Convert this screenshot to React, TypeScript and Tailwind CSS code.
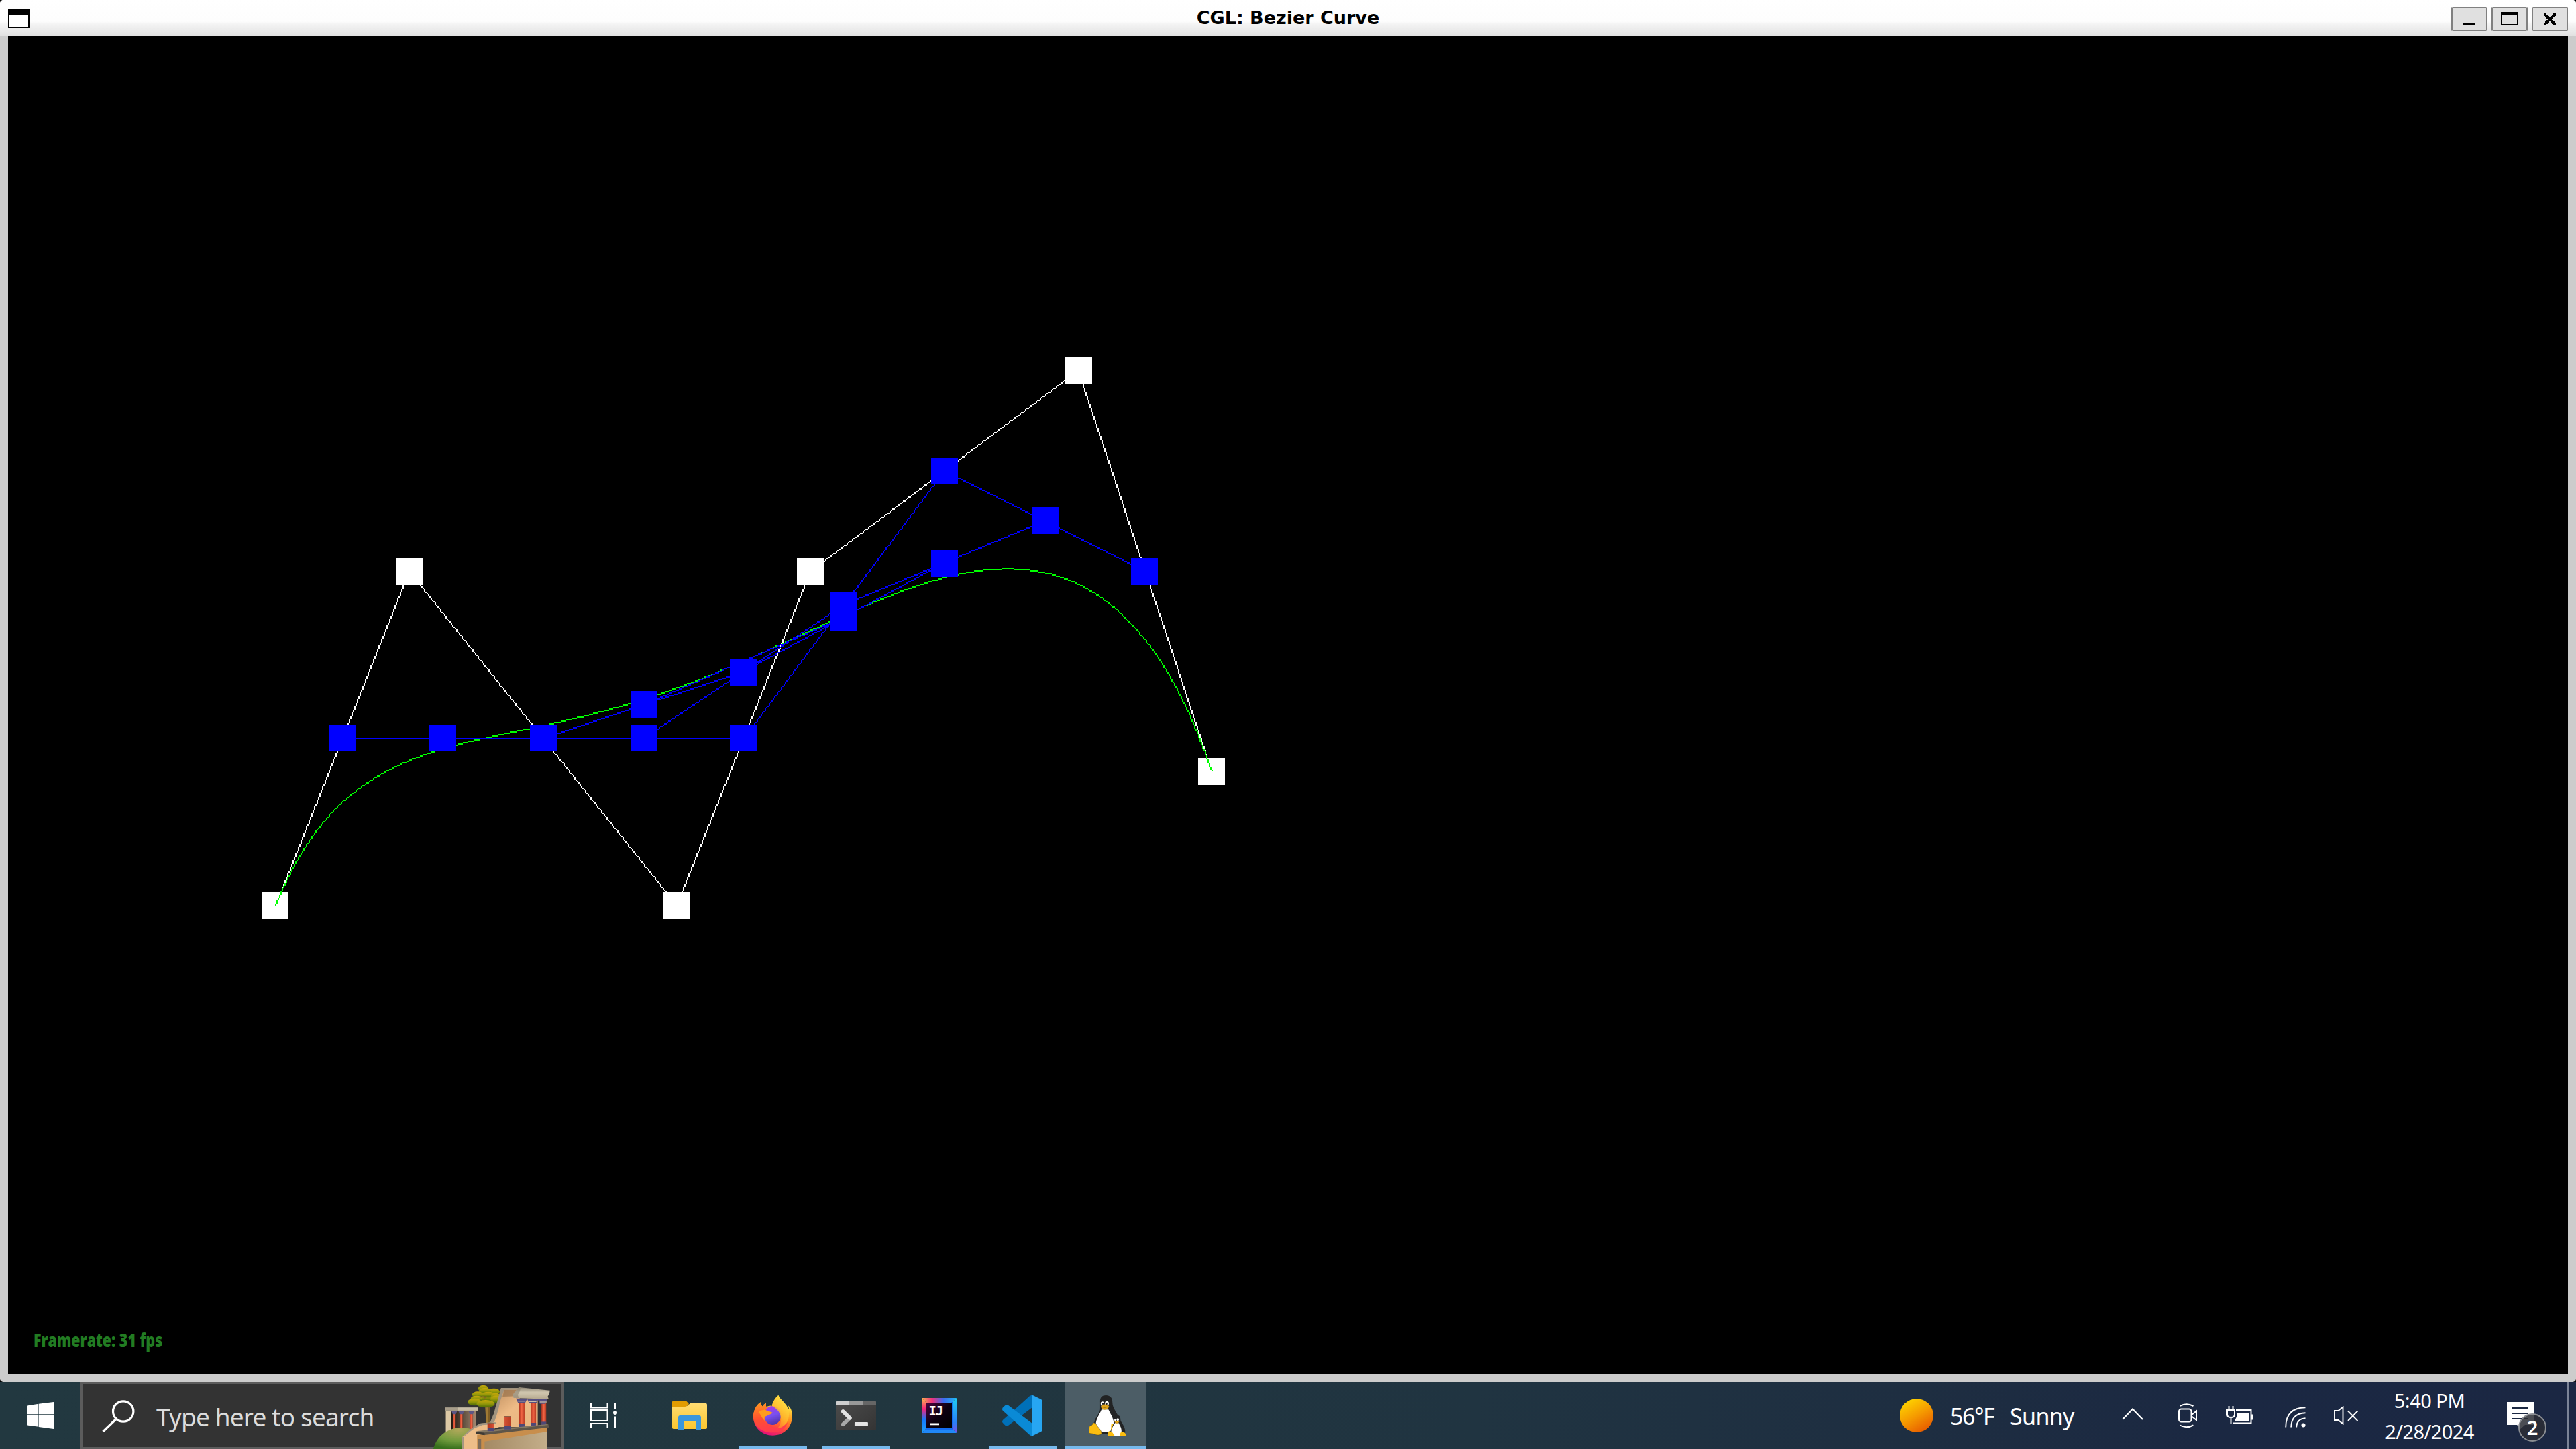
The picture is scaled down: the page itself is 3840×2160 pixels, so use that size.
import React from "react";

type Pt = [number, number];

const SCALE = 0.997;
const CONTROL: Pt[] = [
  [200, 650],
  [300, 400],
  [500, 650],
  [600, 400],
  [800, 250],
  [900, 550],
];

const mid = (pts: Pt[], t: number): Pt[] =>
  pts.slice(1).map((p, i) => [pts[i][0] * (1 - t) + p[0] * t, pts[i][1] * (1 - t) + p[1] * t] as Pt);

const bezier = (t: number): Pt => {
  let pts = CONTROL;
  while (pts.length > 1) pts = mid(pts, t);
  return pts[0];
};

// Rasterises a polyline to unit cells, without antialiasing.
function raster(points: Pt[]): string {
  const seen = new Set<string>();
  for (let i = 0; i < points.length - 1; i++) {
    let [x0, y0] = [points[i][0] * SCALE, points[i][1] * SCALE];
    let [x1, y1] = [points[i + 1][0] * SCALE, points[i + 1][1] * SCALE];
    if (Math.abs(x1 - x0) >= Math.abs(y1 - y0)) {
      if (x0 > x1) [x0, y0, x1, y1] = [x1, y1, x0, y0];
      for (let x = Math.round(x0); x + 0.5 <= x1; x++) {
        const y = Math.floor(y0 + ((x + 0.5 - x0) * (y1 - y0)) / (x1 - x0));
        seen.add(`M${x} ${y}h1v1h-1z`);
      }
    } else {
      if (y0 > y1) [x0, y0, x1, y1] = [x1, y1, x0, y0];
      for (let y = Math.round(y0); y + 0.5 <= y1; y++) {
        const x = Math.floor(x0 + ((y + 0.5 - y0) * (x1 - x0)) / (y1 - y0));
        seen.add(`M${x} ${y}h1v1h-1z`);
      }
    }
  }
  return Array.from(seen).join("");
}

const A = mid(CONTROL, 0.5);
const B = mid(A, 0.5);
const C = mid(B, 0.5);
const D = mid(C, 0.5);
const CURVE: Pt[] = Array.from({ length: 101 }, (_, i) => bezier(i / 100));

const WHITE_BOXES: Pt[] = [[189, 638], [289, 389], [488, 638], [588, 389], [788, 239], [887, 538]];
const BLUE_BOXES: Pt[] = [
  [239, 513], [314, 513], [389, 513], [464, 513], [464, 488], [538, 513], [538, 464],
  [613, 414], [613, 423], [688, 314], [688, 383], [763, 351], [837, 389],
];

function Scene() {
  return (
    <svg className="block h-[1994px] w-[3816px]" viewBox="0 0 1908 997" shapeRendering="crispEdges">
      <path d={raster(CONTROL)} fill="#fff" />
      {WHITE_BOXES.map(([x, y]) => (
        <rect key={`${x}-${y}`} x={x} y={y} width="20" height="20" fill="#fff" />
      ))}
      <path d={raster(CURVE)} fill="#0f0" />
      <path d={[A, B, C, D].map(raster).join("")} fill="#00f" />
      {BLUE_BOXES.map(([x, y]) => (
        <rect key={`${x}-${y}`} x={x} y={y} width="20" height="20" fill="#00f" />
      ))}
    </svg>
  );
}

function TitleButton({ children }: { children: React.ReactNode }) {
  return (
    <div className="relative h-9 w-[54px] border-2 border-[#808080] bg-[#e0e0e0]">
      <svg className="absolute -top-0.5 -left-0.5 h-9 w-[54px]" viewBox="0 0 27 18" shapeRendering="crispEdges">
        <path d="M0 0h1v1h-1zM26 0h1v1h-1zM0 17h1v1h-1zM26 17h1v1h-1z" fill="#b4b4b4" />
        {children}
      </svg>
    </div>
  );
}

const CROSS = [[0, 1, 7, 8], [0, 1, 2, 6, 7, 8], [1, 2, 3, 5, 6, 7], [2, 3, 4, 5, 6], [3, 4, 5]];
const CROSS_PATH = [...CROSS, ...CROSS.slice(0, 4).reverse()]
  .map((row, y) => row.map((x) => `M${x + 9} ${y + 5}h1v1h-1z`).join(""))
  .join("");

function TitleBar() {
  return (
    <div className="relative flex h-[54px] shrink-0 items-start justify-between bg-[linear-gradient(to_bottom,#fff_0px,#fdfdfd_32px,#f4f4f4_36px,#e0e0e0_54px)] pl-3 pr-3">
      <svg className="mt-3.5 h-7 w-8" viewBox="0 0 32 28" shapeRendering="crispEdges">
        <path d="M0 0h32v28h-32z" />
        <path d="M2 8h28v18h-28z" fill="#fff" />
      </svg>
      <div className="absolute inset-x-0 top-[11px] text-center font-['DejaVu_Sans'] text-[27px] leading-[32px] font-bold whitespace-nowrap text-black">
        <span>CGL: Bezier Curve</span>
      </div>
      <div className="mt-2.5 flex gap-1.5">
        <TitleButton>
          <path d="M9 12h9v2h-9z" />
        </TitleButton>
        <TitleButton>
          <path d="M7 4h13v10h-13z M8 6v7h11v-7z" fillRule="evenodd" />
        </TitleButton>
        <TitleButton>
          <path d={CROSS_PATH} />
        </TitleButton>
      </div>
    </div>
  );
}

// x, y, rx, ry of each clump of leaves, back to front
const LEAVES = [
  [318, 128, 34, 22],
  [303, 90, 19, 16],
  [343, 104, 22, 15],
  [310, 101, 23, 14],
  [282, 117, 21, 14],
  [322, 117, 24, 13],
  [350, 124, 18, 14],
  [278, 134, 22, 12],
  [270, 150, 26, 16],
  [352, 138, 22, 17],
  [312, 158, 34, 17],
];

function SearchArt() {
  return (
    <svg className="block h-[97px] w-[198px]" viewBox="100 69 500 291" preserveAspectRatio="none">
      <defs>
        <linearGradient id="sand" x1="0" y1="0" x2="1" y2="1">
          <stop offset="0" stopColor="#b98a5c" />
          <stop offset=".5" stopColor="#eebb86" />
          <stop offset="1" stopColor="#e8b57e" />
        </linearGradient>
        <linearGradient id="col" x1="0" x2="1">
          <stop offset="0" stopColor="#b0341e" />
          <stop offset=".45" stopColor="#f06444" />
          <stop offset="1" stopColor="#b83c24" />
        </linearGradient>
        <linearGradient id="stone" x1="0" y1="0" x2="0" y2="1">
          <stop offset="0" stopColor="#8f8776" />
          <stop offset=".45" stopColor="#d2c8b0" />
          <stop offset="1" stopColor="#b4a88e" />
        </linearGradient>
        <linearGradient id="leaf" x1="0" y1="0" x2="0" y2="1">
          <stop offset="0" stopColor="#c8a80a" />
          <stop offset=".5" stopColor="#95980a" />
          <stop offset="1" stopColor="#466806" />
        </linearGradient>
        <radialGradient id="hill" cx=".55" cy=".1" r=".9">
          <stop offset="0" stopColor="#b2a85a" />
          <stop offset=".6" stopColor="#6f9a3c" />
          <stop offset="1" stopColor="#37701c" />
        </radialGradient>
        <linearGradient id="wall" x1="0" x2="1">
          <stop offset="0" stopColor="#a48a64" />
          <stop offset="1" stopColor="#c4ae8a" />
        </linearGradient>
        <linearGradient id="room" x1="0" x2="1">
          <stop offset="0" stopColor="#201810" />
          <stop offset="1" stopColor="#a28870" />
        </linearGradient>
      </defs>
      <path d="M162 190h24v100h-24z" fill="#dcc8a4" />
      <path d="M182 190h94v90h-94z" fill="url(#room)" />
      <path d="M160 171h122v20h-122z" fill="url(#stone)" />
      <path d="M160 171h46v20h-46z" fill="#6c6558" opacity=".35" />
      <path d="M160 171h122v3h-122z" fill="#6c6558" />
      {[194, 220, 258].map((x) => (
        <g key={x}>
          <path d={`M${x - 5} 200h10v72h-10z`} fill="url(#col)" />
          <path d={`M${x - 10} 192h20l-4 13h-12z`} fill="#5c5684" />
          <path d={`M${x - 6} 198h12v3h-12z`} fill="#c8bca8" />
        </g>
      ))}
      <path d="M310 168h18l-2 80h-12z" fill="#a07a34" />
      <path d="M322 168h6l-2 80h-5z" fill="#7c5c24" />
      {LEAVES.map(([x, y, rx, ry]) => (
        <ellipse key={`${x}-${y}`} cx={x} cy={y} rx={rx} ry={ry} fill="url(#leaf)" />
      ))}
      <path d="M300 124l8 8 10-6M296 130l-6-6" stroke="#8a6428" strokeWidth="4" fill="none" />
      <path d="M370 88L440 90 440 134 508 134 508 262 330 262 340 240z" fill="url(#sand)" />
      <path d="M382 96h54l-8 28-52 2z" fill="#82603e" opacity=".5" />
      <path d="M370 87h66v8h-54l-8 26-8 28-5 28-7 30-8 28-3 6-14 0 5-16 9-24 6-28 8-30 5-22z" fill="#a0937f" />
      <path d="M437 84l117 14-3 18-5 8 3 13-110-4-22-2-2-14 8-14z" fill="url(#stone)" />
      <path d="M437 84l8 2-6 20-6 12 4 14-20-1-2-14 8-14z" fill="#8f8470" opacity=".6" />
      {[[448, 438, 262, 134, 21], [490, 482, 257, 136, 20], [530, 522, 252, 138, 18]].map(([c, x, b, t, w]) => (
        <g key={c}>
          <path d={`M${x} ${t + 18}h${w}V${b}h-${w}z`} fill="url(#col)" />
          <path d={`M${c - 22} ${t}h${t === 138 ? 36 : 43}l-8 20h-${t === 138 ? 20 : 27}z`} fill="#565082" />
          <path d={`M${c - 14} ${t + 10}h27v4h-27z`} fill="#c8bca8" />
          <path d={`M${x} ${b - 14}h${w}V${b}h-${w}z`} fill="#4e4876" />
        </g>
      ))}
      <path d="M115 360c12-56 50-94 104-96 30-1 56 12 70 34v62z" fill="url(#hill)" />
      <path d="M224 360v-54l20-22 22-18 26-20 60-6 10 22-60 24-20 74z" fill="#edbd88" />
      <path d="M224 310l20-28 22-20 26-17 42-4 18 0v7l-52 5-30 14-16 14-14 14-16 14z" fill="#a39682" />
      <path d="M224 306h5v54h-5z" fill="#a39682" />
      <path d="M280 296l264-34v98H280z" fill="#c88e4c" />
      <path d="M308 326l236-44v78H308z" fill="url(#wall)" />
      <path d="M283 315h12v45h-12z" fill="#7d6c58" />
      <path d="M274 282l274-32 3 13-243 34-32-6z" fill="#5e5548" />
      <path d="M274 280l270-31 4 3-240 34z" fill="#857863" />
      <path d="M274 282l34 6v10l-32-6z" fill="#3e3a34" />
      <path d="M319 244h24v22h-24zM383 214h24v46h-24z" fill="url(#col)" />
      <path d="M319 264h24v16h-24zM383 256h24v16h-24z" fill="#4e4876" />
      <path d="M383 213h24v5h-24zM319 243h24v5h-24z" fill="#8c6048" />
    </svg>
  );
}

function Search() {
  return (
    <div className="relative h-[100px] w-[720px] shrink-0 border-[3px] border-[#5c5c5c] bg-[#333]">
      <div className="flex h-full items-center">
        <svg className="ml-7 h-[50px] w-[52px]" viewBox="0 0 52 50" fill="none" stroke="#fff">
          <circle cx="32.7" cy="19" r="15.2" strokeWidth="3.2" />
          <path d="M21.5 31L2.5 49" strokeWidth="3.4" />
        </svg>
        <span className="mt-[3px] ml-[30px] font-['Noto_Sans'] text-[37px] leading-[50px] tracking-[-0.85px] whitespace-nowrap text-[#dcdcdc]">
          Type here to search
        </span>
      </div>
      <div className="absolute top-0 left-[517px]">
        <SearchArt />
      </div>
    </div>
  );
}

function TaskButton({ running, active, children }: { running?: boolean; active?: boolean; children: React.ReactNode }) {
  return (
    <div className="flex h-[100px] w-[124px] shrink-0 justify-center">
      <div
        className={
          active
            ? "relative flex w-[121px] items-center justify-center bg-[#4c5d66]"
            : "relative flex w-[101px] items-center justify-center"
        }
      >
        {children}
        {(running || active) && <div className="absolute inset-x-0 bottom-0 h-[5px] bg-[#76b9ed]" />}
      </div>
    </div>
  );
}

function Explorer() {
  return (
    <svg className="h-[45px] w-[52px]" viewBox="0 0 52 45">
      <defs>
        <linearGradient id="fold" x1="0" y1="0" x2="0" y2="1">
          <stop offset="0" stopColor="#ffdc72" />
          <stop offset="1" stopColor="#fcc62e" />
        </linearGradient>
      </defs>
      <path d="M0 8h22l5-4h23q2 0 2 2v34q0 2-2 2H2q-2 0-2-2z" fill="url(#fold)" />
      <path d="M2 0h17q2 0 3 1.500l3 3.500-3 3q-1 1-3 1H0V2q0-2 2-2z" fill="#e29c00" />
      <path d="M9 44V25q0-3 3-3h28q3 0 3 3v19h-8V31H17.500v13z" fill="#3a96dd" />
    </svg>
  );
}

function Firefox() {
  return (
    <svg className="h-[60px] w-[58px]" viewBox="1323 120 146 180" preserveAspectRatio="none">
      <defs>
        <linearGradient id="ff1" x1=".75" y1="0" x2=".4" y2="1">
          <stop offset="0" stopColor="#fff44f" />
          <stop offset=".28" stopColor="#ffd23a" />
          <stop offset=".5" stopColor="#ff9420" />
          <stop offset=".75" stopColor="#ff4a3c" />
          <stop offset="1" stopColor="#e3107a" />
        </linearGradient>
        <linearGradient id="ff2" x1=".3" y1="0" x2=".6" y2="1">
          <stop offset="0" stopColor="#a838e4" />
          <stop offset=".5" stopColor="#7a50f0" />
          <stop offset="1" stopColor="#4e34a8" />
        </linearGradient>
        <linearGradient id="ff3" x1=".1" y1="0" x2=".3" y2="1">
          <stop offset="0" stopColor="#ff9a1e" />
          <stop offset=".55" stopColor="#ff5030" />
          <stop offset="1" stopColor="#ff3a50" />
        </linearGradient>
        <linearGradient id="ff4" x1=".8" y1="0" x2=".2" y2="1">
          <stop offset="0" stopColor="#ffe847" />
          <stop offset=".6" stopColor="#ffb42a" />
          <stop offset="1" stopColor="#ff7030" />
        </linearGradient>
      </defs>
      <path d="M1352 150C1330 165 1323 195 1323 215C1323 262 1355 299 1396 299C1438 299 1469 262 1469 212C1469 190 1464 176 1452 164C1456 172 1457 180 1455 184C1447 154 1425 145 1417 120C1405 132 1396 150 1393 168C1388 165 1380 168 1372 172C1370 167 1371 160 1371 155C1365 158 1360 163 1357 170C1353 165 1352 158 1352 150Z" fill="url(#ff1)" />
      <path d="M1352 150C1330 165 1323 195 1323 215C1323 256 1355 286 1396 286C1424 286 1444 270 1452 240C1438 262 1410 270 1386 260C1366 252 1358 232 1364 210L1394 196L1372 172C1370 167 1371 160 1371 155C1365 158 1360 163 1357 170C1353 165 1352 158 1352 150Z" fill="url(#ff3)" />
      <ellipse cx="1395" cy="210" rx="31" ry="42" fill="url(#ff2)" />
      <path d="M1393 168C1396 148 1405 132 1417 120C1425 145 1460 160 1456 212C1454 240 1440 262 1414 268C1436 236 1430 190 1393 168Z" fill="url(#ff4)" opacity=".85" />
      <path d="M1342 196C1350 186 1358 188 1366 184C1372 190 1384 192 1395 197C1392 205 1380 206 1374 212C1366 214 1362 220 1366 234C1354 222 1352 206 1342 196Z" fill="#ff9c1c" />
    </svg>
  );
}

function Terminal() {
  return (
    <svg className="h-11 w-[60px]" viewBox="134 144 174 132" preserveAspectRatio="none">
      <defs>
        <linearGradient id="tbody" x1="0" y1="0" x2="1" y2="1">
          <stop offset="0" stopColor="#4c4c4c" />
          <stop offset="1" stopColor="#343434" />
        </linearGradient>
        <clipPath id="tclip">
          <rect x="134" y="144" width="174" height="132" rx="6" />
        </clipPath>
      </defs>
      <g clipPath="url(#tclip)">
        <path d="M134 144h174v132h-174z" fill="url(#tbody)" />
        <path d="M134 144h58v21h-58z" fill="#cfcfcf" />
        <path d="M192 144h58v21h-58z" fill="#999" />
        <path d="M250 144h58v21h-58z" fill="#666" />
      </g>
      <path d="M165 250L194 221" stroke="#a9a9a9" strokeWidth="17" strokeLinecap="round" />
      <path d="M165 192L194 221" stroke="#e2e2e2" strokeWidth="17" strokeLinecap="round" />
      <rect x="215" y="240" width="58" height="18" rx="3" fill="#e4e4e4" />
    </svg>
  );
}

function IntelliJ() {
  return (
    <div className="relative h-[52px] w-[52px]">
      <svg className="block h-[52px] w-[52px]" viewBox="0 0 52 52">
        <defs>
          <linearGradient id="ijt" x1="0" x2="1">
            <stop offset="0" stopColor="#ffb050" />
            <stop offset=".3" stopColor="#f0307c" />
            <stop offset=".62" stopColor="#3c6cf0" />
            <stop offset="1" stopColor="#20b8f4" />
          </linearGradient>
          <linearGradient id="ijl" x1="0" y1="0" x2="0" y2="1">
            <stop offset="0" stopColor="#ffc04c" />
            <stop offset=".32" stopColor="#f8207c" />
            <stop offset=".62" stopColor="#1478ff" />
            <stop offset="1" stopColor="#20a0f8" />
          </linearGradient>
          <linearGradient id="ijr" x1="0" y1="0" x2="0" y2="1">
            <stop offset="0" stopColor="#1fd0f0" />
            <stop offset=".7" stopColor="#2a80f8" />
            <stop offset="1" stopColor="#7c50e8" />
          </linearGradient>
          <linearGradient id="ijc" x1="0" y1="0" x2="1" y2="1">
            <stop offset="0" stopColor="#4a0440" />
            <stop offset=".5" stopColor="#0c0010" />
            <stop offset="1" stopColor="#000" />
          </linearGradient>
        </defs>
        <path d="M0 0h52L45 7H7z" fill="url(#ijt)" />
        <path d="M0 0l7 7v38l-7 7z" fill="url(#ijl)" />
        <path d="M52 0v52l-7-7V7z" fill="url(#ijr)" />
        <path d="M0 52l7-7h38l7 7z" fill="#2088f8" />
        <path d="M45.500 6v40H6" fill="none" stroke="#1060f0" strokeWidth="2.500" opacity=".7" />
        <path d="M7 7h38v38H7z" fill="url(#ijc)" />
        <path d="M12 37.500h14v2.800H12z" fill="#fff" />
      </svg>
      <span className="absolute top-[9px] left-[10.500px] font-['DejaVu_Sans_Mono'] text-[19px] leading-5 font-bold tracking-[-1.500px] text-white">
        IJ
      </span>
    </div>
  );
}

function VsCode() {
  return (
    <svg className="h-[60px] w-[60px]" viewBox="853 120 175 180" preserveAspectRatio="none">
      <path d="M984 120v54L880 254q-7 6-14 0l-10-10q-6-7 0-14L972 124q6-5 12-4z" fill="#0070b8" />
      <path d="M984 300v-54L880 165q-7-5-14 0l-10 10q-6 7 0 14L972 296q6 5 12 4z" fill="#0a8ad6" />
      <path d="M980 120q4-1 8 1l34 17q6 3 6 9v126q0 6-6 9l-34 17q-4 2-8 1 4-2 4-8V128q0-6-4-8z" fill="#27a6f2" />
    </svg>
  );
}

function Tux() {
  return (
    <svg className="ml-[4px] h-[60px] w-[55px]" viewBox="1229 120 159 180" preserveAspectRatio="none">
      <path d="M1278 152C1276 128 1288 120 1303 120C1320 120 1331 130 1331 152C1330 180 1360 206 1364 236C1368 270 1350 290 1330 294L1276 294C1262 284 1250 262 1252 244C1256 216 1280 200 1278 176Z" fill="#222324" />
      <path d="M1284 184C1276 206 1258 228 1260 252C1264 276 1280 284 1298 285C1318 284 1338 276 1338 252C1338 224 1320 200 1314 184Z" fill="#fff" />
      <ellipse cx="1288" cy="158" rx="7.500" ry="10" fill="#fff" />
      <ellipse cx="1307" cy="157" rx="8.500" ry="11" fill="#fff" />
      <circle cx="1290" cy="158" r="4" fill="#222" />
      <circle cx="1305" cy="158" r="4.500" fill="#222" />
      <path d="M1281 170C1288 160 1300 156 1316 168C1318 176 1304 184 1298 185C1290 184 1282 178 1281 170Z" fill="#e0a318" />
      <path d="M1284 172q14 8 30-2" fill="none" stroke="#8c6410" strokeWidth="2" />
      <path d="M1248 244C1256 240 1262 250 1268 260C1276 270 1284 278 1284 290C1282 298 1270 298 1260 296C1250 290 1236 292 1230 288C1232 276 1228 262 1234 256C1242 256 1244 252 1248 244Z" fill="#fbbd10" stroke="#4a3c10" strokeWidth="1.500" />
      <path d="M1326 250q10-8 16 6l-6 20-12 6z" fill="#fbbd10" />
      <path d="M1338 232C1336 214 1342 209 1352 209C1362 209 1366 216 1366 232C1370 244 1388 262 1386 286L1370 298H1322C1318 276 1338 256 1338 232Z" fill="#222324" />
      <path d="M1342 244C1336 256 1324 270 1326 286L1340 300H1362L1370 284C1372 266 1362 254 1358 244Z" fill="#fff" />
      <ellipse cx="1343" cy="230" rx="4" ry="5" fill="#fff" />
      <ellipse cx="1354" cy="229" rx="5" ry="6" fill="#fff" />
      <path d="M1340 238q8-8 20 0-2 7-10 8-8-1-10-8z" fill="#e0a318" />
      <path d="M1312 300q-2-22 8-20 14 4 18 20zM1364 300q0-16 8-18 12 0 16 12v6z" fill="#fbbd10" />
    </svg>
  );
}

function Taskbar() {
  return (
    <div className="flex h-[100px] w-full shrink-0 bg-[linear-gradient(to_right,#223840_0px,#21363f_1400px,#203441_2200px,#1e2e41_2850px,#1b2842_3300px,#1b2743_3840px)] font-['Noto_Sans'] text-white">
      <div className="flex w-[120px] shrink-0 items-center justify-center">
        <svg className="h-10 w-10" viewBox="0 0 40 40" fill="#fff">
          <path d="M0 5.500L16 3v15.200H0zM17.600 2.800L40 0v18.200H17.600zM0 19.800h16V36.500L0 34.500zM17.600 19.800H40V40L17.600 37z" />
        </svg>
      </div>
      <Search />
      <div className="flex w-[126px] shrink-0 items-center pl-10">
        <svg className="h-10 w-10" viewBox="0 0 40 40" fill="none" stroke="#fff" strokeWidth="2">
          <path d="M1 1v7.500h24.500V1M1 39v-7h24.500v7M1 12h24.500v16H1zM37 1v9.500M37 21.500V39" />
          <circle cx="37" cy="16" r="3" fill="#fff" stroke="none" />
        </svg>
      </div>
      <TaskButton><Explorer /></TaskButton>
      <TaskButton running><Firefox /></TaskButton>
      <TaskButton running><Terminal /></TaskButton>
      <TaskButton><IntelliJ /></TaskButton>
      <TaskButton running><VsCode /></TaskButton>
      <TaskButton active><Tux /></TaskButton>
      <div className="flex-1" />
      <div className="flex w-[310px] shrink-0 items-center pl-[22px] text-[34px] leading-[50px] whitespace-nowrap">
        <div className="h-[50px] w-[50px] shrink-0 rounded-full bg-[linear-gradient(150deg,#ffda00_5%,#f59a00_50%,#e45000_95%)]" />
        <span className="mt-0.5 ml-[25px] tracking-[-1.500px]">56°F</span>
        <span className="mt-0.5 ml-[24px] tracking-[-0.7px]">Sunny</span>
      </div>
      <div className="flex w-[118px] shrink-0 items-center justify-center">
        <svg className="mb-1 h-[18px] w-8" viewBox="0 0 32 18" fill="none" stroke="#fff" strokeWidth="2.200">
          <path d="M1 17L16 1.500 31 17" />
        </svg>
      </div>
      <div className="flex w-[46px] shrink-0 items-center justify-center">
        <svg className="h-[38px] w-[30px]" viewBox="0 0 30 38" fill="none" stroke="#fff" strokeWidth="2">
          <rect x="2" y="9.500" width="18.500" height="19" rx="3.500" />
          <path d="M20.500 18.500l7.500-6v13.500l-7.500-6M3.500 5q9.500-5.500 20 0M3.500 33.500q9.500 5.500 20 0" />
        </svg>
      </div>
      <div className="flex w-[110px] shrink-0 items-center justify-center">
        <svg className="h-7 w-[42px]" viewBox="0 0 42 28" fill="none" stroke="#fff" strokeWidth="2">
          <path d="M15 6h22.500v19.500H11M2 6h11v6.500q0 4.500-5.500 4.500T2 12.500zM7.500 17v10M4.500 0v6M10.500 0v6" />
          <path d="M16 10h18v12H13l3-6zM38 12.500h3v8h-3z" fill="#fff" stroke="none" />
        </svg>
      </div>
      <div className="flex w-[54px] shrink-0 items-center justify-center">
        <svg className="mt-1 h-[31px] w-[31px]" viewBox="0 0 31 31" fill="none" stroke="#fff" strokeWidth="1.900">
          <path d="M1.200 30.500Q1.200 1.500 30.500 1.200M9.200 30.500Q9.500 9.800 30.500 9.200M17.200 30.500Q17.500 18 30.500 17.200" />
          <circle cx="27.500" cy="27.500" r="3" fill="#fff" stroke="none" />
        </svg>
      </div>
      <div className="flex w-[98px] shrink-0 items-center justify-center">
        <svg className="h-7 w-9" viewBox="0 0 36 28" fill="none" stroke="#fff" strokeWidth="1.900">
          <path d="M1 7h5.500L13.500 1.500v25L6.500 21H1zM21 7.500l14.500 14.500M35.500 7.500L21 22" />
        </svg>
      </div>
      <div className="flex w-[154px] shrink-0 flex-col items-center pt-[5px] pr-[3px] text-[29px] leading-[46px] whitespace-nowrap">
        <span className="tracking-[-0.5px]">5:40 PM</span>
        <span className="tracking-[-0.6px]">2/28/2024</span>
      </div>
      <div className="w-[127px] shrink-0 pt-[30px] pl-[37px]">
        <div className="relative h-10 w-10">
          <svg className="block h-10 w-10" viewBox="0 0 40 40" fill="#fff">
            <path d="M0 0h40v34H27l-8 7v-3l-4-4H0z" />
            <path d="M8 8h24v2H8zM8 16h24v2H8zM8 24h24v2H8z" fill="#1b2842" />
          </svg>
          <div className="absolute top-[17px] left-[17px] h-[42px] w-[42px] rounded-full border-2 border-[#8a8d92] bg-[#2b2e35]/85 text-center text-[29px] leading-[37px] font-semibold">
            2
          </div>
        </div>
      </div>
      <div className="w-[3px] shrink-0 bg-[#7b8497]" />
      <div className="w-[10px] shrink-0" />
    </div>
  );
}

export default function App() {
  return (
    <div className="flex h-[2160px] w-[3840px] flex-col overflow-hidden bg-black">
      <div className="flex h-[2060px] shrink-0 flex-col overflow-hidden rounded-[5px] bg-[#ccc]">
        <TitleBar />
        <div className="relative mx-3 h-[1994px] bg-black">
          <Scene />
          <div className="absolute bottom-[31px] left-[38px] origin-left scale-x-[0.765] font-['Open_Sans'] text-[28px] leading-[40px] font-extrabold whitespace-nowrap text-[#227c22]">
            Framerate: 31 fps
          </div>
        </div>
      </div>
      <Taskbar />
    </div>
  );
}
